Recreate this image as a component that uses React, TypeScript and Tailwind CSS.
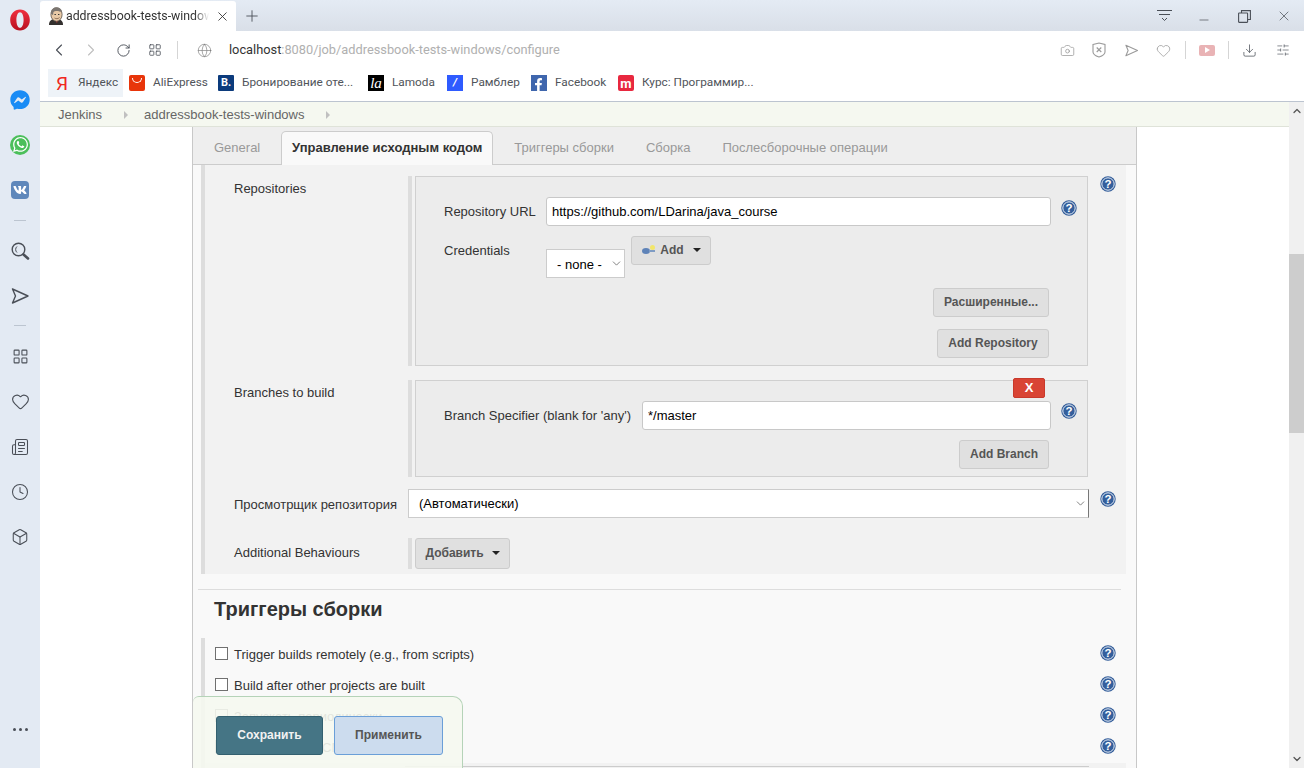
import * as React from 'react'
import {
  ChevronLeft,
  ChevronRight,
  RotateCw,
  LayoutGrid,
  Globe,
  Camera,
  Heart,
  Clock,
  Box,
  Newspaper,
  X,
  Plus,
  Minus,
  Download,
  SlidersHorizontal,
  ChevronUp,
  ChevronDown,
} from 'lucide-react'
import { FaFacebookMessenger, FaWhatsapp, FaVk, FaFacebookF } from 'react-icons/fa'

function SendIcon({ size = 20, color = '#4a4f57' }: { size?: number; color?: string }) {
  return (
    <svg width={size} height={size} viewBox="0 0 20 20" fill="none" stroke={color} strokeWidth="1.4" strokeLinejoin="round">
      <path d="M2.5 3 L18 10 L2.5 17 L5.5 10 Z" />
    </svg>
  )
}

function SearchIcon() {
  return (
    <svg width="20" height="20" viewBox="0 0 20 20" fill="none" stroke="#4a4f57" strokeWidth="1.4">
      <circle cx="8.5" cy="8.5" r="6.3" />
      <path d="M7 5.5 A4 4 0 0 0 7 11.5" strokeWidth="1" />
      <path d="M13.5 13.5 L18 17.5" strokeWidth="2.6" strokeLinecap="round" />
    </svg>
  )
}

function HelpIcon() {
  return (
    <svg width="16" height="16" viewBox="0 0 16 16" className="block shrink-0">
      <circle cx="8" cy="8" r="7.7" fill="#2f5a98" />
      <circle cx="8" cy="8" r="6.2" fill="#345f9c" stroke="#e8eef6" strokeWidth="1" />
      <text x="8" y="12" textAnchor="middle" fontSize="11.5" fontWeight="700" fontFamily="Liberation Sans, sans-serif" fill="#ffffff">
        ?
      </text>
    </svg>
  )
}

function Caret() {
  return (
    <svg width="8" height="4" viewBox="0 0 8 4" className="shrink-0">
      <path d="M0 0 H8 L4 4 Z" fill="#222" />
    </svg>
  )
}

function KeyIcon() {
  return (
    <svg width="16" height="14" viewBox="0 0 16 14" className="shrink-0">
      <ellipse cx="5" cy="8" rx="4" ry="3" fill="#5e83b8" />
      <rect x="8" y="7" width="6" height="2" fill="#7f9cc4" />
      <circle cx="11.5" cy="4.5" r="2.5" fill="#f2e66b" />
    </svg>
  )
}

function JenkinsIcon() {
  return (
    <svg width="16" height="18" viewBox="0 0 16 18">
      <path d="M1 18 C1 13 4 12 8 12 C12 12 15 13 15 18 Z" fill="#33302e" />
      <path d="M7 13 L10 13 L9 16 Z" fill="#c43a3a" />
      <ellipse cx="8.5" cy="7.5" rx="5.6" ry="6.8" fill="#e8c9a6" stroke="#5b5048" strokeWidth="0.8" />
      <path d="M3 7 C2.5 2 6 0.3 9 0.5 C12.5 0.7 14 3 14 5.5 C11 3.5 7 3.5 5.5 5 L5 8 Z" fill="#7b7570" />
      <path d="M6.5 7.5 h1.4 M10 7.5 h1.4" stroke="#333" strokeWidth="1" />
      <path d="M6.5 11 C8 12 10 12 11.5 10.5" stroke="#7a5b45" strokeWidth="0.8" fill="none" />
    </svg>
  )
}

function OperaLogo() {
  return (
    <svg width="20" height="22" viewBox="0 0 20 22">
      <defs>
        <linearGradient id="op" x1="0" y1="0" x2="0" y2="1">
          <stop offset="0" stopColor="#f0303f" />
          <stop offset="1" stopColor="#b8101f" />
        </linearGradient>
      </defs>
      <path
        fillRule="evenodd"
        d="M10 0.5 C15.5 0.5 19.8 5 19.8 11 C19.8 17 15.5 21.5 10 21.5 C4.5 21.5 0.2 17 0.2 11 C0.2 5 4.5 0.5 10 0.5 Z M10 3.2 C7.8 3.2 6.4 6.6 6.4 11 C6.4 15.4 7.8 18.8 10 18.8 C12.2 18.8 13.6 15.4 13.6 11 C13.6 6.6 12.2 3.2 10 3.2 Z"
        fill="url(#op)"
      />
    </svg>
  )
}

function ShieldIcon() {
  return (
    <svg width="14" height="16" viewBox="0 0 14 16" fill="none" stroke="#9a9a9a" strokeWidth="1.1">
      <path d="M1 2.5 L7 1 L13 2.5 V10 C13 12.5 10 14 7 15 C4 14 1 12.5 1 10 Z" />
      <path d="M4.7 5.5 L9.3 10 M9.3 5.5 L4.7 10" />
    </svg>
  )
}

function FilterLinesIcon() {
  return (
    <svg width="15" height="12" viewBox="0 0 15 12" fill="none" stroke="#4a4f57" strokeWidth="1">
      <path d="M0 0.5 H15 M2 4.5 H13 M5 8 L7.5 10.5 L10 8" />
    </svg>
  )
}

function RestoreIcon() {
  return (
    <svg width="13" height="13" viewBox="0 0 13 13" fill="none" stroke="#4a4f57" strokeWidth="1.1">
      <rect x="0.6" y="3" width="9" height="9.4" rx="0.6" />
      <path d="M3.5 3 V0.6 H12.4 V9.5 H9.6" />
    </svg>
  )
}

function Bookmark({ className, icon, label }: { className: string; icon: React.ReactNode; label: string }) {
  return (
    <div className={`flex h-[28px] shrink-0 items-center gap-2 px-1.5 ${className}`}>
      <span className="flex h-4 w-4 shrink-0 items-center justify-center">{icon}</span>
      <span className="whitespace-nowrap text-[11.8px] text-[#50545a]">{label}</span>
    </div>
  )
}

function SideSlot({ children }: { children: React.ReactNode }) {
  return <div className="flex h-[45px] w-full items-center justify-center text-[#4a4f57]">{children}</div>
}

function ToolSlot({ children }: { children: React.ReactNode }) {
  return <div className="flex h-8 w-8 shrink-0 items-center justify-center">{children}</div>
}

function Sidebar() {
  return (
    <div className="flex h-full w-10 shrink-0 flex-col items-center bg-[#e3eaf3]">
      <div className="mt-[9px] flex h-[22px] items-center">
        <OperaLogo />
      </div>
      <div className="mt-[46px] w-full">
        <SideSlot>
          <FaFacebookMessenger size={20} color="#1a8cf5" />
        </SideSlot>
        <SideSlot>
          <span className="flex h-[20px] w-[20px] items-center justify-center rounded-full bg-[#4bbf5a]">
            <FaWhatsapp size={17} color="#ffffff" />
          </span>
        </SideSlot>
        <SideSlot>
          <span className="flex h-[18px] w-[18px] items-center justify-center rounded-[4px] bg-[#5f88bb]">
            <FaVk size={14} color="#ffffff" />
          </span>
        </SideSlot>
      </div>
      <div className="mt-[8px] h-px w-3 bg-[#bcc5d0]" />
      <div className="mt-[7px] w-full">
        <SideSlot>
          <SearchIcon />
        </SideSlot>
        <SideSlot>
          <SendIcon />
        </SideSlot>
      </div>
      <div className="mt-[7px] h-px w-3 bg-[#bcc5d0]" />
      <div className="mt-[8px] w-full">
        <SideSlot>
          <LayoutGrid size={17} strokeWidth={1.5} />
        </SideSlot>
        <SideSlot>
          <Heart size={19} strokeWidth={1.4} />
        </SideSlot>
        <SideSlot>
          <Newspaper size={18} strokeWidth={1.4} />
        </SideSlot>
        <SideSlot>
          <Clock size={18} strokeWidth={1.4} />
        </SideSlot>
        <SideSlot>
          <Box size={18} strokeWidth={1.4} />
        </SideSlot>
      </div>
      <div className="mb-[37px] mt-auto flex gap-[3px]">
        <span className="h-[3px] w-[3px] rounded-full bg-[#4a4f57]" />
        <span className="h-[3px] w-[3px] rounded-full bg-[#4a4f57]" />
        <span className="h-[3px] w-[3px] rounded-full bg-[#4a4f57]" />
      </div>
    </div>
  )
}

function TabStrip() {
  return (
    <div className="flex h-[31px] shrink-0 items-end bg-gradient-to-b from-[#e4ebf4] to-[#d9dfe8]">
      <div className="flex h-[30px] w-[196px] items-center rounded-t-[3px] bg-white pl-2">
        <JenkinsIcon />
        <span
          className="ml-[2px] w-[143px] overflow-hidden whitespace-nowrap text-[12.3px] text-[#333]"
          style={{ maskImage: 'linear-gradient(to right, black 90%, transparent)' }}
        >
          addressbook-tests-windows
        </span>
        <X size={15} strokeWidth={1.4} className="ml-[6px] text-[#333]" />
      </div>
      <div className="flex h-[30px] w-[32px] items-center justify-center">
        <Plus size={18} strokeWidth={1.2} className="text-[#4a4f57]" />
      </div>
      <div className="ml-auto flex h-[30px] items-center">
        <div className="flex w-[40px] items-center justify-center">
          <FilterLinesIcon />
        </div>
        <div className="flex w-[40px] items-center justify-center pt-[7px]">
          <Minus size={14} strokeWidth={1.2} className="text-[#4a4f57]" />
        </div>
        <div className="flex w-[40px] items-center justify-center">
          <RestoreIcon />
        </div>
        <div className="flex w-[40px] items-center justify-center">
          <X size={16} strokeWidth={1.1} className="text-[#4a4f57]" />
        </div>
      </div>
    </div>
  )
}

function Toolbar() {
  return (
    <div className="flex h-[38px] shrink-0 items-center bg-white pl-[3px] pr-[5px]">
      <ToolSlot>
        <ChevronLeft size={20} strokeWidth={1.3} className="text-[#4a4f57]" />
      </ToolSlot>
      <ToolSlot>
        <ChevronRight size={20} strokeWidth={1.3} className="text-[#bfbfbf]" />
      </ToolSlot>
      <ToolSlot>
        <RotateCw size={15} strokeWidth={1.5} className="text-[#4a4f57]" />
      </ToolSlot>
      <ToolSlot>
        <LayoutGrid size={14} strokeWidth={1.4} className="text-[#4a4f57]" />
      </ToolSlot>
      <div className="ml-[6px] h-[18px] w-px bg-[#d5d5d5]" />
      <Globe size={15} strokeWidth={1} className="ml-[19px] text-[#777]" />
      <span className="ml-[17px] text-[12.8px] text-[#333]">
        localhost<span className="text-[#b0b0b0]">:8080/job/addressbook-tests-windows/configure</span>
      </span>
      <div className="ml-auto flex items-center">
        <ToolSlot>
          <Camera size={15} strokeWidth={1.1} className="text-[#8f8f8f]" />
        </ToolSlot>
        <ToolSlot>
          <ShieldIcon />
        </ToolSlot>
        <ToolSlot>
          <SendIcon size={15} color="#9a9a9a" />
        </ToolSlot>
        <ToolSlot>
          <Heart size={15} strokeWidth={1.1} className="text-[#8f8f8f]" />
        </ToolSlot>
        <div className="ml-[6px] h-[18px] w-px bg-[#d5d5d5]" />
        <div className="flex w-[42px] items-center justify-center">
          <span className="flex h-[11px] w-4 items-center justify-center rounded-[2px] bg-[#e9b3b5]">
            <span className="ml-[1px] h-0 w-0 border-y-[3px] border-l-[5px] border-y-transparent border-l-white" />
          </span>
        </div>
        <div className="h-[18px] w-px bg-[#d5d5d5]" />
        <div className="flex w-[38px] items-center justify-center pl-[3px]">
          <Download size={15} strokeWidth={1.2} className="text-[#4a4f57]" />
        </div>
        <ToolSlot>
          <SlidersHorizontal size={14} strokeWidth={1.1} className="text-[#4a4f57]" />
        </ToolSlot>
      </div>
    </div>
  )
}

function Bookmarks() {
  return (
    <div className="flex h-[33px] shrink-0 items-start border-b border-[#bcc4d0] bg-white pl-2">
      <Bookmark
        className="w-[75px] bg-[#eef3f8]"
        label="Яндекс"
        icon={<span className="text-[19px] font-normal leading-none text-[#f0281e]">Я</span>}
      />
      <Bookmark
        className="w-[89px]"
        label="AliExpress"
        icon={
          <span className="flex h-4 w-4 items-start justify-center rounded-[2px] bg-[#e8350a] pt-[3px]">
            <span className="h-[5px] w-[10px] rounded-b-full border-x border-b border-white" />
          </span>
        }
      />
      <Bookmark
        className="w-[150px]"
        label="Бронирование оте..."
        icon={
          <span className="flex h-4 w-4 items-center justify-center rounded-[1px] bg-[#0c3b7c] text-[11px] font-bold text-white">
            B.
          </span>
        }
      />
      <Bookmark
        className="w-[79px]"
        label="Lamoda"
        icon={
          <span
            className="flex h-4 w-4 items-center justify-center bg-black text-[15px] italic leading-none text-white"
            style={{ fontFamily: '"Liberation Serif", serif' }}
          >
            la
          </span>
        }
      />
      <Bookmark
        className="w-[84px]"
        label="Рамблер"
        icon={
          <span className="flex h-4 w-4 items-center justify-center bg-[#2f5bff] text-[11px] font-bold italic text-white">
            /
          </span>
        }
      />
      <Bookmark
        className="w-[87px]"
        label="Facebook"
        icon={
          <span className="flex h-4 w-4 items-end justify-end bg-[#3f66ad] pr-[2px]">
            <FaFacebookF size={13} color="#ffffff" />
          </span>
        }
      />
      <Bookmark
        className="w-[150px]"
        label="Курс: Программир..."
        icon={
          <span className="flex h-4 w-4 items-center justify-center rounded-[2px] bg-[#e8283f] text-[13px] font-bold leading-none text-white">
            m
          </span>
        }
      />
    </div>
  )
}

function Breadcrumb() {
  return (
    <div className="flex h-[25px] shrink-0 items-center border-b border-[#dfe3d9] bg-[#f5f8f0] pl-[18px] pt-px text-[13px] text-[#666]">
      <span>Jenkins</span>
      <span className="ml-[22px] h-0 w-0 border-y-[4px] border-l-[4px] border-y-transparent border-l-[#c0c0c0]" />
      <span className="ml-[16px]">addressbook-tests-windows</span>
      <span className="ml-[22px] h-0 w-0 border-y-[4px] border-l-[4px] border-y-transparent border-l-[#c0c0c0]" />
    </div>
  )
}

function Tabs() {
  const base = 'text-[13px] text-[#999] whitespace-nowrap'
  return (
    <div className="flex h-[38px] shrink-0 items-end border-b border-[#cccccc] bg-[#eeeeee]">
      <span className={`ml-[21px] mb-[7px] ${base}`}>General</span>
      <div className="relative top-px ml-[21px] flex h-[34px] w-[212px] items-center justify-center rounded-t-[5px] border border-b-0 border-[#cccccc] bg-[#f9f9f9] pb-[2px] text-[13px] font-bold text-[#333]">
        Управление исходным кодом
      </div>
      <span className={`ml-[21px] mb-[7px] ${base}`}>Триггеры сборки</span>
      <span className={`ml-[32px] mb-[7px] ${base}`}>Сборка</span>
      <span className={`ml-[32px] mb-[7px] ${base}`}>Послесборочные операции</span>
    </div>
  )
}

function GreyButton({ className, children }: { className: string; children: React.ReactNode }) {
  return (
    <button className={`flex h-[29px] items-center justify-center rounded-[3px] border border-[#cccccc] bg-[#e0e0e0] pb-[2px] text-[12px] font-bold text-[#555] ${className}`}>
      {children}
    </button>
  )
}

function TextField({ className, value }: { className: string; value: string }) {
  return (
    <input
      readOnly
      value={value}
      className={`h-[29px] shrink-0 rounded-[3px] border border-[#c8c8c8] bg-white px-[5px] text-[13px] text-black ${className}`}
    />
  )
}

function SelectField({ className, selectClass, value }: { className: string; selectClass: string; value: string }) {
  return (
    <div className={`relative shrink-0 ${className}`}>
      <select className={`block h-[29px] w-full appearance-none rounded-none border border-[#cccccc] bg-white text-[13px] text-black ${selectClass}`}>
        <option>{value}</option>
      </select>
      <ChevronDown size={13} strokeWidth={1.5} className="pointer-events-none absolute right-[2px] top-[8px] text-[#666]" />
    </div>
  )
}

function RepoSection() {
  return (
    <div className="ml-2 mr-[10px] flex flex-col border-l-4 border-[#dddddd] bg-[#f2f2f2] pl-[29px] pb-[5px] pt-[11px] text-[13px] text-[#333]">
      <div className="flex items-start">
        <div className="w-[174px] shrink-0 pt-[3px]">Repositories</div>
        <div className="flex w-[681px] shrink-0">
          <div className="w-1 shrink-0 bg-[#dddddd]" />
          <div className="ml-[3px] flex h-[190px] w-[673px] flex-col border border-[#d0d0d0] bg-[#ececec] pl-[28px] pt-[20px]">
            <div className="flex items-center">
              <span className="w-[102px] shrink-0">Repository URL</span>
              <TextField className="w-[505px]" value="https://github.com/LDarina/java_course" />
              <span className="ml-[10px] -mt-[8px]">
                <HelpIcon />
              </span>
            </div>
            <div className="mt-[10px] flex items-start">
              <span className="w-[102px] shrink-0 pt-[5px]">Credentials</span>
              <SelectField className="mt-[13px] w-[79px]" selectClass="pl-[10px] pt-[2px]" value="- none -" />
              <GreyButton className="ml-[6px] w-[80px] gap-[3px]">
                <KeyIcon />
                Add
                <span className="ml-[6px]">
                  <Caret />
                </span>
              </GreyButton>
            </div>
            <GreyButton className="mr-[38px] mt-[10px] w-[116px] self-end">Расширенные...</GreyButton>
            <GreyButton className="mr-[38px] mt-[12px] w-[112px] self-end">Add Repository</GreyButton>
          </div>
        </div>
        <span className="ml-[11px]">
          <HelpIcon />
        </span>
      </div>

      <div className="mt-[14px] flex items-start">
        <div className="w-[174px] shrink-0 pt-[3px]">Branches to build</div>
        <div className="flex w-[681px] shrink-0">
          <div className="w-1 shrink-0 bg-[#dddddd]" />
          <div className="relative ml-[3px] flex h-[97px] w-[673px] flex-col border border-[#d0d0d0] bg-[#ececec] pl-[28px] pt-[20px]">
            <button className="absolute -top-[3px] right-[42px] flex h-[20px] w-[32px] items-center justify-center rounded-[2px] border border-[#c9392b] bg-[#d94434] text-[13px] font-bold text-white">
              X
            </button>
            <div className="flex items-center">
              <span className="w-[198px] shrink-0">Branch Specifier (blank for 'any')</span>
              <TextField className="w-[409px]" value="*/master" />
              <span className="ml-[10px] -mt-[10px]">
                <HelpIcon />
              </span>
            </div>
            <GreyButton className="mr-[38px] mt-[10px] w-[90px] self-end">Add Branch</GreyButton>
          </div>
        </div>
      </div>

      <div className="mt-[12px] flex items-center">
        <div className="w-[174px] shrink-0 pt-[2px]">Просмотрщик репозитория</div>
        <SelectField className="w-[681px]" selectClass="border-r-[#777777] pl-[10px] pt-[1px]" value="(Автоматически)" />
        <span className="ml-[11px] -mt-[10px]">
          <HelpIcon />
        </span>
      </div>

      <div className="mt-[20px] flex items-center">
        <div className="w-[174px] shrink-0 pb-[2px]">Additional Behaviours</div>
        <div className="w-1 self-stretch bg-[#dddddd]" />
        <GreyButton className="ml-[3px] h-[31px] w-[95px] gap-[8px]">
          Добавить
          <Caret />
        </GreyButton>
      </div>
    </div>
  )
}

function TriggerRow({ label }: { label: string }) {
  return (
    <div className="flex h-[31px] items-center">
      <input type="checkbox" readOnly className="-mt-px h-[13px] w-[13px] shrink-0 appearance-none border border-[#707070] bg-white" />
      <span className="ml-[6px] pt-[2px] text-[13px] text-[#333]">{label}</span>
      <span className="-mt-[2px] ml-auto mr-[10px]">
        <HelpIcon />
      </span>
    </div>
  )
}

function SaveBar() {
  return (
    <div className="absolute bottom-0 left-[153px] flex h-[72px] w-[270px] items-start gap-[11px] rounded-tl-[6px] rounded-tr-[10px] border-r border-t border-[#b5d3b8] bg-[#f5f8f0]/90 pl-[23px] pt-[19px]">
      <button className="flex h-[39px] w-[107px] items-center justify-center rounded-[3px] border border-[#33606f] bg-[#457585] pb-[2px] text-[12px] font-bold text-[#f2f2f2]">
        Сохранить
      </button>
      <button className="flex h-[39px] w-[109px] items-center justify-center rounded-[3px] border border-[#6a9fd8] bg-[#ccdcee] pb-[2px] text-[12px] font-bold text-[#555]">
        Применить
      </button>
    </div>
  )
}

function ConfigPanel() {
  return (
    <div className="ml-[152px] flex h-full w-[945px] flex-col border-x border-[#c8c8c8] bg-[#f9f9f9]">
      <Tabs />
      <RepoSection />
      <div className="ml-[5px] mr-[15px] mt-[15px] h-px bg-[#dddddd]" />
      <h2 className="ml-[21px] mt-[5px] text-[20px] font-bold leading-[28px] text-[#333]">Триггеры сборки</h2>
      <div className="ml-2 mr-[10px] mt-[15px] flex flex-1 flex-col border-l-4 border-[#dddddd] pl-[10px]">
        <TriggerRow label="Trigger builds remotely (e.g., from scripts)" />
        <TriggerRow label="Build after other projects are built" />
        <TriggerRow label="Запускать периодически" />
        <TriggerRow label="Опрашивать SCM" />
        <div className="-ml-[10px] mt-[1px] flex-1 bg-[#f2f2f2] pl-[200px] pr-[37px] pt-[3px]">
          <div className="h-px bg-[#cccccc]" />
        </div>
      </div>
    </div>
  )
}

function Scrollbar() {
  return (
    <div className="relative flex h-full w-[15px] shrink-0 flex-col items-center justify-between bg-[#f0f0f0] py-[3px] text-[#555]">
      <ChevronUp size={12} strokeWidth={2.5} />
      <ChevronDown size={12} strokeWidth={2.5} />
      <div className="absolute left-0 top-[152px] h-[179px] w-full bg-[#cdcdcd]" />
    </div>
  )
}

export default function App() {
  return (
    <div
      className="flex h-[768px] w-[1304px] overflow-hidden bg-white"
      style={{ fontFamily: '"Liberation Sans", Arial, sans-serif' }}
    >
      <Sidebar />
      <div className="flex min-w-0 flex-1 flex-col">
        <div style={{ fontFamily: 'Roboto, sans-serif' }}>
          <TabStrip />
          <Toolbar />
          <Bookmarks />
        </div>
        <div className="flex min-h-0 flex-1">
          <div className="flex min-w-0 flex-1 flex-col">
            <Breadcrumb />
            <div className="relative min-h-0 flex-1 overflow-hidden">
              <ConfigPanel />
              <SaveBar />
            </div>
          </div>
          <Scrollbar />
        </div>
      </div>
    </div>
  )
}
